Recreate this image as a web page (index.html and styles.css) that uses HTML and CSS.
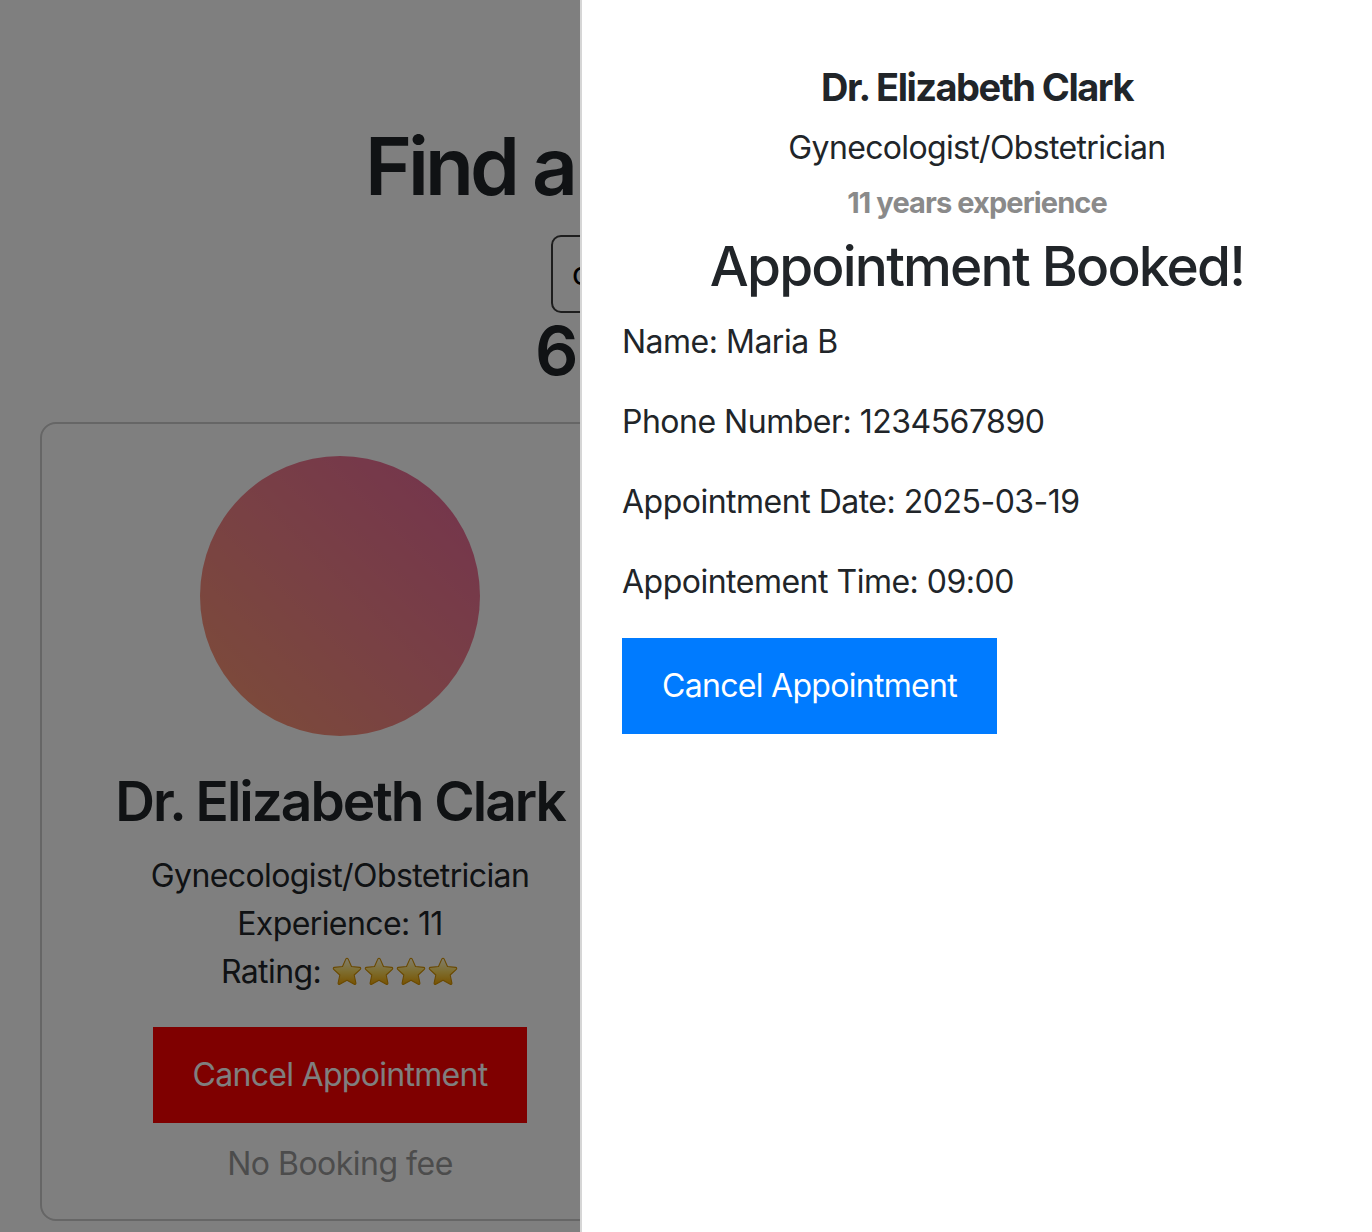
FILE: index.html
```html
<!DOCTYPE html>
<html lang="en">
<head>
<meta charset="utf-8">
<title>Find a Doctor</title>
<link rel="stylesheet" href="styles.css">
</head>
<body>
<main class="page">
  <section class="search">
    <h1 class="search-title">Find a doctor</h1>
    <div class="search-box"><span class="search-value">obstetrician</span></div>
    <h2 class="search-count">6 doctors</h2>
  </section>
  <section class="cards">
    <article class="card">
      <div class="avatar"></div>
      <h3 class="card-name">Dr. Elizabeth Clark</h3>
      <div class="card-line">Gynecologist/Obstetrician</div>
      <div class="card-line">Experience: 11</div>
      <div class="card-line">Rating:
        <span class="stars">
          <svg class="star" viewBox="0 0 32 32"><defs><linearGradient id="sg" x1="0" y1="0" x2="0" y2="1"><stop offset="0" stop-color="#fffbe0"/><stop offset="0.5" stop-color="#fddc60"/><stop offset="1" stop-color="#f0a400"/></linearGradient></defs><path d="M16 2.2c.5 0 .9.3 1.1.7l3.4 7.6 8.2.9c1 .1 1.4 1.3.6 2l-6.1 5.6 1.7 8.1c.2 1-.9 1.7-1.7 1.2L16 24.2l-7.2 4.1c-.8.5-1.9-.2-1.7-1.2l1.7-8.1-6.1-5.6c-.8-.7-.4-1.9.6-2l8.2-.9 3.4-7.6c.2-.4.6-.7 1.1-.7z" fill="url(#sg)" stroke="#d49200" stroke-width="1.1" stroke-linejoin="round"/></svg><svg class="star" viewBox="0 0 32 32"><path d="M16 2.2c.5 0 .9.3 1.1.7l3.4 7.6 8.2.9c1 .1 1.4 1.3.6 2l-6.1 5.6 1.7 8.1c.2 1-.9 1.7-1.7 1.2L16 24.2l-7.2 4.1c-.8.5-1.9-.2-1.7-1.2l1.7-8.1-6.1-5.6c-.8-.7-.4-1.9.6-2l8.2-.9 3.4-7.6c.2-.4.6-.7 1.1-.7z" fill="url(#sg)" stroke="#d49200" stroke-width="1.1" stroke-linejoin="round"/></svg><svg class="star" viewBox="0 0 32 32"><path d="M16 2.2c.5 0 .9.3 1.1.7l3.4 7.6 8.2.9c1 .1 1.4 1.3.6 2l-6.1 5.6 1.7 8.1c.2 1-.9 1.7-1.7 1.2L16 24.2l-7.2 4.1c-.8.5-1.9-.2-1.7-1.2l1.7-8.1-6.1-5.6c-.8-.7-.4-1.9.6-2l8.2-.9 3.4-7.6c.2-.4.6-.7 1.1-.7z" fill="url(#sg)" stroke="#d49200" stroke-width="1.1" stroke-linejoin="round"/></svg><svg class="star" viewBox="0 0 32 32"><path d="M16 2.2c.5 0 .9.3 1.1.7l3.4 7.6 8.2.9c1 .1 1.4 1.3.6 2l-6.1 5.6 1.7 8.1c.2 1-.9 1.7-1.7 1.2L16 24.2l-7.2 4.1c-.8.5-1.9-.2-1.7-1.2l1.7-8.1-6.1-5.6c-.8-.7-.4-1.9.6-2l8.2-.9 3.4-7.6c.2-.4.6-.7 1.1-.7z" fill="url(#sg)" stroke="#d49200" stroke-width="1.1" stroke-linejoin="round"/></svg>
        </span>
      </div>
      <button class="btn btn-red" type="button">Cancel Appointment</button>
      <div class="card-fee">No Booking fee</div>
    </article>
  </section>
</main>

<div class="backdrop"></div>

<aside class="panel">
  <h5 class="panel-name">Dr. Elizabeth Clark</h5>
  <div class="panel-spec">Gynecologist/Obstetrician</div>
  <div class="panel-exp">11 years experience</div>
  <h3 class="panel-title">Appointment Booked!</h3>
  <p class="panel-item">Name: Maria B</p>
  <p class="panel-item">Phone Number: 1234567890</p>
  <p class="panel-item">Appointment Date: 2025-03-19</p>
  <p class="panel-item">Appointement Time: 09:00</p>
  <button class="btn btn-blue" type="button">Cancel Appointment</button>
</aside>
</body>
</html>
```

FILE: styles.css
```css
html, body {
  margin: 0;
  padding: 0;
}
body {
  width: 1372px;
  height: 1232px;
  overflow: hidden;
  background: #ffffff;
  color: #212529;
  font-family: Inter, "Noto Sans", "Liberation Sans", sans-serif;
  font-size: 32px;
  line-height: 1.5;
  letter-spacing: -0.5px;
}

.page {
  width: 580px;
  height: 1232px;
  overflow: hidden;
  display: flex;
  flex-direction: column;
}

.search {
  display: flex;
  flex-direction: column;
  padding-top: 118px;
}
.search-title {
  margin: 0 0 21px 365px;
  font-size: 80px;
  line-height: 96px;
  font-weight: 600;
  white-space: nowrap;
  letter-spacing: -4px;
}
.search-box {
  flex: none;
  margin-left: 551px;
  width: 700px;
  height: 74px;
  border: 2px solid #3a3a3a;
  border-radius: 10px;
  display: flex;
  align-items: center;
  padding-left: 19px;
  color: #000;
  box-sizing: content-box;
}
.search-value {
  font-size: 32px;
}
.search-count {
  margin: -4px 0 0 535px;
  font-size: 68px;
  line-height: 82px;
  font-weight: 600;
  white-space: nowrap;
}

.cards {
  display: flex;
  padding: 31px 0 0 40px;
}
.card {
  flex: none;
  width: 596px;
  border: 2px solid #cccccc;
  border-radius: 16px;
  padding: 32px 0 31px;
  display: flex;
  flex-direction: column;
  align-items: center;
  text-align: center;
}
.avatar {
  width: 280px;
  height: 280px;
  border-radius: 50%;
  background: linear-gradient(45deg, #fb9a70 0%, #f2818a 50%, #e8679c 100%);
}
.card-name {
  margin: 32px 0 17px;
  font-size: 55px;
  line-height: 67px;
  font-weight: 600;
  letter-spacing: -2px;
}
.card-line {
  font-size: 32px;
  line-height: 48px;
  display: flex;
  align-items: center;
  justify-content: center;
  gap: 10px;
  letter-spacing: -0.6px;
}
.stars {
  display: inline-flex;
  gap: 0;
}
.star {
  width: 32px;
  height: 32px;
  display: block;
}

.btn {
  border: 0;
  border-radius: 0;
  font-family: inherit;
  font-size: 32px;
  line-height: 48px;
  padding: 24px 40px;
  color: #ffffff;
  letter-spacing: -0.7px;
  cursor: pointer;
}
.btn-red {
  margin-top: 31px;
  background: #ff0000;
}
.card-fee {
  margin-top: 17px;
  color: #999999;
  font-size: 32px;
  line-height: 48px;
}

.backdrop {
  position: fixed;
  inset: 0;
  background: rgba(0, 0, 0, 0.5);
}

.panel {
  position: fixed;
  top: 0;
  right: 0;
  bottom: 0;
  width: 750px;
  padding: 63px 0 0 40px;
  background: #ffffff;
  border-left: 2px solid #d6d6d6;
  display: flex;
  flex-direction: column;
  align-items: flex-start;
}
.panel-name,
.panel-spec,
.panel-exp,
.panel-title {
  align-self: stretch;
  text-align: center;
  margin-left: -40px;
}
.panel-name {
  margin-top: 0;
  margin-bottom: 13px;
  font-size: 38px;
  line-height: 48px;
  font-weight: 700;
  letter-spacing: -1.5px;
}
.panel-spec {
  margin-bottom: 7px;
  font-size: 32px;
  line-height: 48px;
  letter-spacing: -0.65px;
}
.panel-exp {
  margin-bottom: 6px;
  font-size: 29px;
  line-height: 48px;
  font-weight: 700;
  color: #8a8a8a;
  letter-spacing: -0.9px;
}
.panel-title {
  margin-top: 0;
  margin-bottom: 18px;
  font-size: 55px;
  line-height: 67px;
  font-weight: 500;
  letter-spacing: -1.8px;
}
.panel-item {
  margin: 0 0 32px;
  font-size: 32px;
  line-height: 48px;
}
.btn-blue {
  background: #007bff;
}
```
